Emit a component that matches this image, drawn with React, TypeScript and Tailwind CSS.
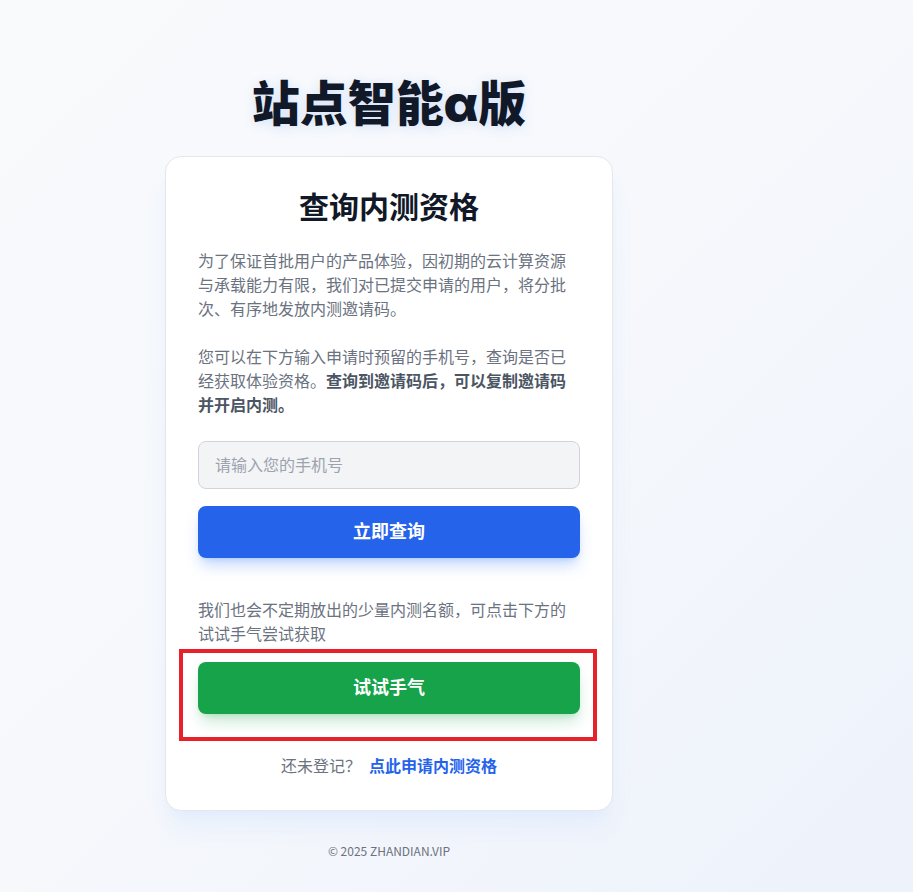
export default function App() {
  return (
    <div className="min-h-screen w-full bg-gradient-to-br from-[#f8fafc] via-[#f6f8fc] to-[#edf2fb] font-['Inter','Noto_Sans_CJK_SC',sans-serif]">
      <div className="w-[778px] flex flex-col items-center pt-20 pb-10">
        <h1 className="text-5xl leading-none font-black text-[#111827] mb-7 [text-shadow:0_2px_12px_rgba(59,130,246,0.18)]">
          站点智能α版
        </h1>

        <div className="w-[448px] bg-white rounded-2xl border border-[#e5e7eb] shadow-xl shadow-blue-100/60 p-8">
          <h2 className="text-3xl font-bold text-[#111827] text-center mb-6">
            查询内测资格
          </h2>

          <p className="text-base leading-6 text-[#6b7280]">
            为了保证首批用户的产品体验，因初期的云计算资源与承载能力有限，我们对已提交申请的用户，将分批次、有序地发放内测邀请码。
          </p>
          <p className="text-base leading-6 text-[#6b7280] mt-6">
            您可以在下方输入申请时预留的手机号，查询是否已经获取体验资格。
            <span className="font-bold text-[#4b5563]">
              查询到邀请码后，可以复制邀请码并开启内测。
            </span>
          </p>

          <input
            type="text"
            placeholder="请输入您的手机号"
            className="mt-6 w-full h-12 rounded-lg bg-[#f3f4f6] border border-[#d1d5db] px-4 text-base text-[#374151] placeholder:text-[#9ca3af] outline-none"
          />

          <button className="mt-[17px] w-full h-[52px] rounded-lg bg-[#2563eb] text-white text-lg font-bold shadow-lg shadow-[#3b82f6]/30">
            立即查询
          </button>

          <p className="mt-10 text-base leading-6 text-[#6b7280]">
            我们也会不定期放出的少量内测名额，可点击下方的试试手气尝试获取
          </p>

          <div className="relative mt-4">
            <button className="w-full h-[52px] rounded-lg bg-[#16a34a] text-white text-lg font-bold shadow-lg shadow-[#16a34a]/25">
              试试手气
            </button>
            <div className="pointer-events-none absolute -left-[19px] -right-[17px] -top-[13px] -bottom-[27px] border-4 border-[#e8202a]"></div>
          </div>

          <div className="mt-10 text-center text-base leading-6 text-[#6b7280]">
            还未登记？
            <a href="#" className="ml-2 font-bold text-[#2563eb]">
              点此申请内测资格
            </a>
          </div>
        </div>

        <div className="mt-8 text-xs text-[#6b7280] font-['Noto_Sans_CJK_SC',sans-serif]">
          © 2025 ZHANDIAN.VIP
        </div>
      </div>
    </div>
  );
}
